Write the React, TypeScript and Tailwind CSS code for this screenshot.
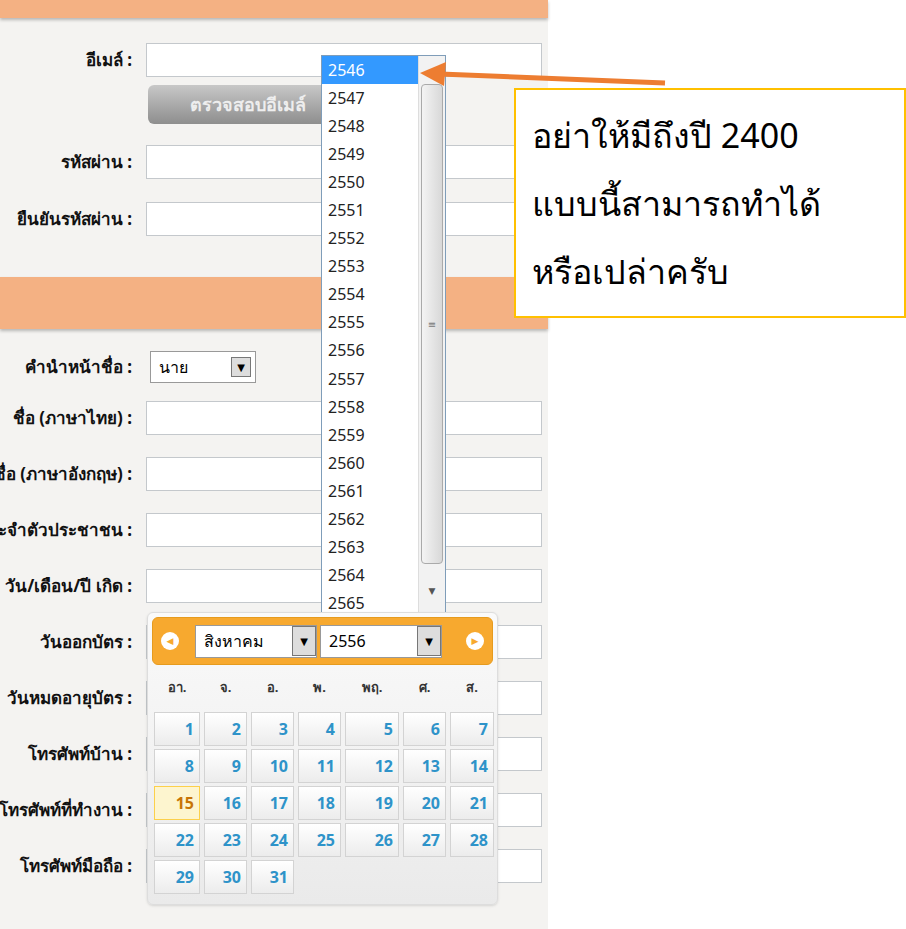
const rowsTop = [
  { label: "อีเมล์ :", top: 43 },
  { label: "รหัสผ่าน :", top: 145 },
  { label: "ยืนยันรหัสผ่าน :", top: 202 },
]

const rowsBottom = [
  "ชื่อ (ภาษาไทย) :",
  "ชื่อ (ภาษาอังกฤษ) :",
  "เลขบัตรประจำตัวประชาชน :",
  "วัน/เดือน/ปี เกิด :",
  "วันออกบัตร :",
  "วันหมดอายุบัตร :",
  "โทรศัพท์บ้าน :",
  "โทรศัพท์ที่ทำงาน :",
  "โทรศัพท์มือถือ :",
]

const years = Array.from({ length: 20 }, (_, i) => 2546 + i)
const days = Array.from({ length: 31 }, (_, i) => i + 1)
const dayNames = ["อา.", "จ.", "อ.", "พ.", "พฤ.", "ศ.", "ส."]

function Label({ text }: { text: string }) {
  return (
    <div className="flex w-[140px] shrink-0 justify-end overflow-hidden whitespace-nowrap pr-2 text-[17px] font-bold text-[#111]">
      {text}
    </div>
  )
}

function Arrow() {
  return (
    <svg className="absolute left-[412px] top-[60px]" width="260" height="34" viewBox="0 0 260 34">
      <line x1="253" y1="23" x2="28" y2="14" stroke="#ed7d31" strokeWidth="5" />
      <polygon points="8,13 34,2 32,26" fill="#ed7d31" />
    </svg>
  )
}

export default function App() {
  return (
    <div className="relative h-[929px] w-[906px] overflow-hidden bg-white" style={{ fontFamily: "Tahoma, 'Noto Sans', 'DejaVu Sans', sans-serif" }}>
      <div className="flex h-full w-[548px] flex-col bg-[#f4f3f1]">
        <div className="h-[18px] bg-[#f4b183] shadow-[0_2px_3px_rgba(0,0,0,0.25)]" />
        <div className="flex flex-col pt-[25px]">
          <div className="flex h-[34px] items-center">
            <Label text="อีเมล์ :" />
            <div className="ml-[6px] h-[34px] w-[396px] border border-[#c4c8cc] bg-white" />
          </div>
          <div className="ml-[148px] mt-[8px] flex h-[39px] w-[200px] items-center justify-center rounded-md bg-gradient-to-b from-[#c8c8c8] to-[#8e8e8e] text-[18px] font-bold text-[#eee]">
            ตรวจสอบอีเมล์
          </div>
          {rowsTop.slice(1).map((r, i) => (
            <div key={r.label} className={`flex h-[34px] items-center ${i === 0 ? "mt-[21px]" : "mt-[23px]"}`}>
              <Label text={r.label} />
              <div className="ml-[6px] h-[34px] w-[396px] border border-[#c4c8cc] bg-white" />
            </div>
          ))}
        </div>
        <div className="mt-[41px] h-[52px] bg-[#f4b183] shadow-[0_2px_3px_rgba(0,0,0,0.25)]" />
        <div className="mt-[22px] flex h-[32px] items-center">
          <Label text="คำนำหน้าชื่อ :" />
          <div className="ml-[10px] flex h-[32px] w-[106px] items-center justify-between border border-[#999] bg-white pl-2 pr-1 text-[16px]">
            นาย
            <span className="flex h-[20px] w-[20px] items-center justify-center border border-[#777] bg-[#ddd] text-[10px]">▼</span>
          </div>
        </div>
        <div className="mt-[18px] flex flex-col gap-[22px]">
          {rowsBottom.map((t) => (
            <div key={t} className="flex h-[34px] items-center">
              <Label text={t} />
              <div className="ml-[6px] h-[34px] w-[396px] border border-[#c4c8cc] bg-white" />
            </div>
          ))}
        </div>
      </div>

      {/* year dropdown list */}
      <div className="absolute left-[321px] top-[55px] flex h-[563px] w-[125px] border border-[#7f9db9] bg-white">
        <div className="flex flex-1 flex-col">
          {years.map((y, i) => (
            <div key={y} className={`h-[28.1px] pl-[6px] pt-[2px] text-[16px] leading-[24px] ${i === 0 ? "bg-[#3399ff] text-white" : "text-[#222]"}`}>
              {y}
            </div>
          ))}
        </div>
        <div className="flex w-[27px] flex-col border-l border-[#ddd] bg-[#f2f2f2]">
          <div className="h-[28px] bg-[#f2f2f2]" />
          <div className="mx-[2px] flex h-[480px] items-center justify-center rounded-sm border border-[#aaa] bg-gradient-to-r from-[#f4f4f4] to-[#d8d8d8] text-[10px] text-[#777]">≡</div>
          <div className="flex flex-1 items-center justify-center text-[9px] text-[#555]">▼</div>
        </div>
      </div>

      {/* calendar */}
      <div className="absolute left-[147px] top-[612px] w-[351px] rounded-md border border-[#ddd] bg-gradient-to-b from-[#fafafa] to-[#eaeaea] p-[4px] shadow-sm">
        <div className="flex h-[48px] items-center rounded-md border border-[#e69b1e] bg-[#f7a92f] px-[8px]">
          <span className="flex h-[18px] w-[18px] items-center justify-center rounded-full bg-white text-[9px] text-[#f7a92f]">◀</span>
          <div className="ml-[16px] flex h-[33px] w-[122px] items-center justify-between border border-[#999] bg-white pl-2 text-[16px]">
            สิงหาคม
            <span className="flex h-[30px] w-[24px] items-center justify-center border border-[#777] bg-[#ddd] text-[10px]">▼</span>
          </div>
          <div className="ml-[3px] flex h-[33px] w-[122px] items-center justify-between border border-[#999] bg-white pl-2 text-[16px]">
            2556
            <span className="flex h-[30px] w-[24px] items-center justify-center border border-[#777] bg-[#ddd] text-[10px]">▼</span>
          </div>
          <span className="ml-auto flex h-[18px] w-[18px] items-center justify-center rounded-full bg-white text-[9px] text-[#f7a92f]">▶</span>
        </div>
        <div className="mt-[2px] grid grid-cols-[46px_43px_43px_43px_54px_43px_44px] gap-x-[4px] gap-y-[3px] px-[2px] pb-[6px]">
          {dayNames.map((d) => (
            <div key={d} className="flex h-[42px] items-center justify-center text-[13px] font-bold text-[#333]">{d}</div>
          ))}
          {days.map((d) => (
            <div
              key={d}
              className={`flex h-[34px] items-center justify-end pr-[5px] text-[16px] font-bold ${
                d === 15 ? "border border-[#fcd04b] bg-[#fdf5cf] text-[#c77405]" : "border border-[#d3d3d3] bg-gradient-to-b from-white to-[#ececec] text-[#2e93c9]"
              }`}
            >
              {d}
            </div>
          ))}
        </div>
      </div>

      <Arrow />

      {/* callout */}
      <div className="absolute left-[514px] top-[88px] flex h-[230px] w-[392px] flex-col justify-center border-2 border-[#ffc000] bg-white pl-[16px] text-[34px] leading-[68px] text-black">
        <div>อย่าให้มีถึงปี 2400</div>
        <div>แบบนี้สามารถทำได้</div>
        <div>หรือเปล่าครับ</div>
      </div>
    </div>
  )
}
